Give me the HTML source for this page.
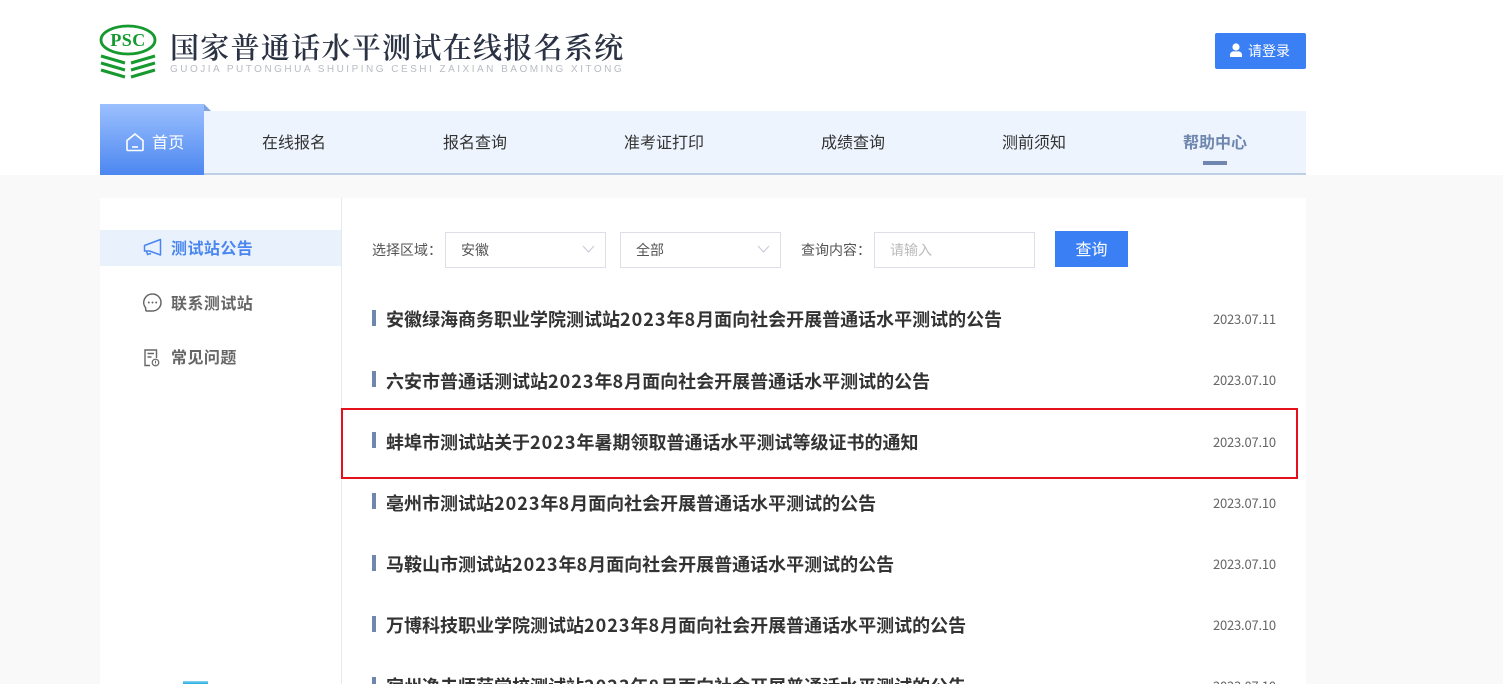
<!DOCTYPE html>
<html lang="zh-CN">
<head>
<meta charset="utf-8">
<title>国家普通话水平测试在线报名系统</title>
<style>
*{margin:0;padding:0;box-sizing:border-box}
html,body{width:1503px;height:684px;overflow:hidden;background:#f9f9f9}
body{position:relative;font-family:"Noto Sans CJK SC","Liberation Sans",sans-serif;color:#333}
.a{position:absolute;white-space:nowrap}
.top{left:0;top:0;width:1503px;height:175px;background:#fff}
.title{left:170px;top:26px;font-family:"Noto Serif CJK SC","Liberation Serif",serif;font-size:29px;line-height:42px;letter-spacing:1.3px;color:#2a3244;font-weight:600}
.sub{left:170px;top:63px;font-family:"Liberation Sans",sans-serif;font-size:10px;line-height:13px;letter-spacing:2.49px;color:#b9bcc4}
.login{left:1215px;top:33px;width:91px;height:36px;background:#3a7ff3;border-radius:2px;color:#fff;font-size:14px;line-height:36px;padding-left:33px}
.nav{left:100px;top:111px;width:1206px;height:64px;background:#edf4fe;border-bottom:2px solid #bfd0e6}
.home{left:100px;top:104px;width:104px;height:71px;background:linear-gradient(#9cc0fe,#4c87f0);color:#fff;font-size:16px;line-height:74px;padding-left:52px;letter-spacing:.3px}
.fold{left:204px;top:104px;width:0;height:0;border-left:7px solid #7ea4e4;border-top:7px solid transparent}
.n{top:110px;height:62px;line-height:62px;font-size:16px;text-align:center;width:120px;color:#333}
.card{left:100px;top:198px;width:1206px;height:486px;background:#fff}
.line{left:341px;top:198px;width:1px;height:486px;background:#e8e8e8}
.sideon{left:100px;top:230px;width:241px;height:36px;background:#e9f1fd}
.s{left:171px;font-size:16px;line-height:24px;font-weight:700;color:#666;letter-spacing:.45px}
.lab{font-size:14px;line-height:20px;color:#555}
.box{height:36px;border:1px solid #dcdfe8;background:#fff;font-size:14px;line-height:34px;padding-left:15px;color:#555}
.btn{left:1055px;top:231px;width:73px;height:36px;background:#3a7ff3;color:#fff;font-size:16px;line-height:34px;text-align:center}
.bar{left:372px;width:4px;height:16px;background:#6f86ae}
.t{left:386px;font-size:18px;line-height:26px;font-weight:700;color:#333}
.t b{letter-spacing:1px;font-weight:700}
.d{left:1213px;font-size:13px;line-height:18px;color:#666;letter-spacing:-.2px}
.red{left:341px;top:408px;width:957px;height:71px;border:2px solid #e60f1c}
svg{position:absolute;display:block}
</style>
</head>
<body>
<div class="a top"></div>

<svg style="left:98px;top:24px" width="60" height="56" viewBox="0 0 60 56">
  <ellipse cx="30" cy="16" rx="27" ry="14" fill="none" stroke="#169a30" stroke-width="2.8"/>
  <text x="30" y="22" text-anchor="middle" font-family="Liberation Serif,serif" font-weight="700" font-size="18" letter-spacing="0.4" fill="#169a30">PSC</text>
  <g fill="none" stroke="#169a30" stroke-width="3">
    <path d="M3 32L27 39M3 39L27 46M3 46L27 53"/>
    <path d="M57 32L33 39M57 39L33 46M57 46L33 53"/>
  </g>
</svg>
<div class="a title">国家普通话水平测试在线报名系统</div>
<div class="a sub">GUOJIA PUTONGHUA SHUIPING CESHI ZAIXIAN BAOMING XITONG</div>

<div class="a login">请登录</div>
<svg style="left:1229px;top:43px" width="14" height="15" viewBox="0 0 14 15">
  <circle cx="7" cy="4" r="3.6" fill="#fff"/>
  <path d="M1 14v-2.2C1 9.6 3 8.4 4.6 8.4h4.8C11 8.4 13 9.6 13 11.8V14z" fill="#fff"/>
</svg>

<div class="a nav"></div>
<div class="a home">首页</div>
<div class="a fold"></div>
<svg style="left:126px;top:133px" width="18" height="19" viewBox="0 0 18 19">
  <path d="M1 7.5L9 1L17 7.5V16.5a1 1 0 0 1-1 1H2a1 1 0 0 1-1-1z" fill="none" stroke="#fff" stroke-width="1.6"/>
  <path d="M6 14h6" stroke="#fff" stroke-width="1.6"/>
</svg>
<div class="a n" style="left:234px">在线报名</div>
<div class="a n" style="left:415px">报名查询</div>
<div class="a n" style="left:604px">准考证打印</div>
<div class="a n" style="left:793px">成绩查询</div>
<div class="a n" style="left:974px">测前须知</div>
<div class="a n" style="left:1155px;color:#6f86ae;font-weight:700">帮助中心</div>
<div class="a" style="left:1203px;top:161px;width:24px;height:4px;background:#6f86ae"></div>

<div class="a card"></div>
<div class="a line"></div>
<div class="a sideon"></div>

<svg style="left:143px;top:238px" width="19" height="19" viewBox="0 0 19 19">
  <path d="M17.5 1.5V17L6.5 13H1.5V7.5L17.5 1.5Z" fill="none" stroke="#4a86f0" stroke-width="1.5" stroke-linejoin="round"/>
  <path d="M3.5 13.3L4.6 16.5L8 15.5" fill="none" stroke="#4a86f0" stroke-width="1.5"/>
</svg>
<div class="a s" style="top:235px;color:#4a86f0">测试站公告</div>

<svg style="left:143px;top:293px" width="19" height="19" viewBox="0 0 19 19">
  <path d="M9.5 1A8.5 8.5 0 1 1 9.5 18H3.5C2.5 18 2.8 16.5 2.6 14.8A8.5 8.5 0 0 1 9.5 1Z" fill="none" stroke="#666" stroke-width="1.5"/>
  <circle cx="5.8" cy="9.5" r="1" fill="#666"/><circle cx="9.5" cy="9.5" r="1" fill="#666"/><circle cx="13.2" cy="9.5" r="1" fill="#666"/>
</svg>
<div class="a s" style="top:290px">联系测试站</div>

<svg style="left:144px;top:349px" width="16" height="18" viewBox="0 0 16 18">
  <path d="M6 16.5H1V1H12.5V9" fill="none" stroke="#666" stroke-width="1.4"/>
  <path d="M3.5 4.5h6.5M3.5 8h4" stroke="#666" stroke-width="1.4"/>
  <circle cx="11.5" cy="13.5" r="3.3" fill="none" stroke="#666" stroke-width="1.2"/>
  <path d="M11.5 11.8v2.2M11.5 14.6v.8" stroke="#666" stroke-width="1"/>
</svg>
<div class="a s" style="top:344px">常见问题</div>

<div class="a" style="left:183px;top:681px;width:25px;height:3px;background:linear-gradient(#8fd6f2,#1ea8e0)"></div>

<div class="a lab" style="left:372px;top:240px">选择区域：</div>
<div class="a box" style="left:445px;top:232px;width:161px">安徽</div>
<svg style="left:582px;top:245px" width="13" height="9" viewBox="0 0 13 9"><path d="M1 1L6.5 7L12 1" fill="none" stroke="#c8ccd4" stroke-width="1.1"/></svg>
<div class="a box" style="left:620px;top:232px;width:161px">全部</div>
<svg style="left:757px;top:245px" width="13" height="9" viewBox="0 0 13 9"><path d="M1 1L6.5 7L12 1" fill="none" stroke="#c8ccd4" stroke-width="1.1"/></svg>
<div class="a lab" style="left:801px;top:240px">查询内容：</div>
<div class="a box" style="left:874px;top:232px;width:161px;color:#bbb">请输入</div>
<div class="a btn">查询</div>

<div class="a bar" style="top:310px"></div>
<div class="a t" style="top:306px">安徽绿海商务职业学院测试站<b>2023</b>年<b>8</b>月面向社会开展普通话水平测试的公告</div>
<div class="a d" style="top:310px">2023.07.11</div>

<div class="a bar" style="top:371px"></div>
<div class="a t" style="top:368px">六安市普通话测试站<b>2023</b>年<b>8</b>月面向社会开展普通话水平测试的公告</div>
<div class="a d" style="top:371px">2023.07.10</div>

<div class="a bar" style="top:432px"></div>
<div class="a t" style="top:429px">蚌埠市测试站关于<b>2023</b>年暑期领取普通话水平测试等级证书的通知</div>
<div class="a d" style="top:433px">2023.07.10</div>

<div class="a bar" style="top:493px"></div>
<div class="a t" style="top:490px">亳州市测试站<b>2023</b>年<b>8</b>月面向社会开展普通话水平测试的公告</div>
<div class="a d" style="top:494px">2023.07.10</div>

<div class="a bar" style="top:555px"></div>
<div class="a t" style="top:551px">马鞍山市测试站<b>2023</b>年<b>8</b>月面向社会开展普通话水平测试的公告</div>
<div class="a d" style="top:555px">2023.07.10</div>

<div class="a bar" style="top:616px"></div>
<div class="a t" style="top:612px">万博科技职业学院测试站<b>2023</b>年<b>8</b>月面向社会开展普通话水平测试的公告</div>
<div class="a d" style="top:616px">2023.07.10</div>

<div class="a bar" style="top:677px"></div>
<div class="a t" style="top:673px">宿州逸夫师范学校测试站<b>2023</b>年<b>8</b>月面向社会开展普通话水平测试的公告</div>
<div class="a d" style="top:677px">2023.07.10</div>

<div class="a red"></div>
</body>
</html>
